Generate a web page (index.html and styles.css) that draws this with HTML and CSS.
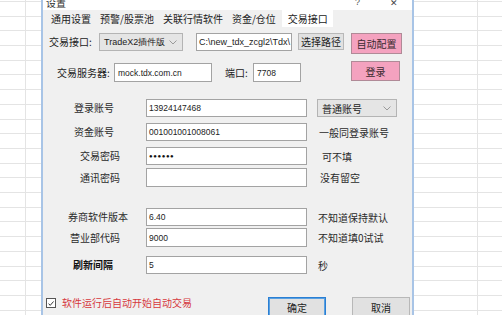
FILE: index.html
```html
<!DOCTYPE html>
<html lang="zh">
<head>
<meta charset="utf-8">
<title>设置</title>
<link rel="stylesheet" href="styles.css">
</head>
<body>
<div class="desk">
  <div class="dialog">
    <div class="titlebar">
      <span class="title">设置</span>
      <span class="tb-help">?</span>
      <span class="tb-close">✕</span>
    </div>
    <div class="tabs">
      <span class="tab">通用设置</span>
      <span class="tab">预警/股票池</span>
      <span class="tab">关联行情软件</span>
      <span class="tab">资金/仓位</span>
      <span class="tab tab-active">交易接口</span>
    </div>

    <div class="row row1">
      <span class="lbl lbl-if">交易接口:</span>
      <div class="combo combo-if"><span class="val">TradeX2插件版</span><svg class="chev" width="8" height="5" viewBox="0 0 8 5"><polyline points="0.5,0.5 4,4 7.5,0.5" fill="none" stroke="#9a9a9a" stroke-width="1"/></svg></div>
      <div class="input input-path"><span class="val">C:\new_tdx_zcgl2\Tdx\</span></div>
      <div class="btn btn-path">选择路径</div>
      <div class="btn-pink btn-auto">自动配置</div>
    </div>

    <div class="row row2">
      <span class="lbl lbl-srv">交易服务器:</span>
      <div class="input input-srv"><span class="val">mock.tdx.com.cn</span></div>
      <span class="lbl lbl-port">端口:</span>
      <div class="input input-port"><span class="val">7708</span></div>
      <div class="btn-pink btn-login">登录</div>
    </div>

    <div class="acct">
      <div class="frow r-login">
        <span class="flbl p74">登录账号</span>
        <div class="input"><span class="val">13924147468</span></div>
        <div class="combo combo-acct"><span class="val cjk">普通账号</span><svg class="chev" width="8" height="5" viewBox="0 0 8 5"><polyline points="0.5,0.5 4,4 7.5,0.5" fill="none" stroke="#9a9a9a" stroke-width="1"/></svg></div>
      </div>
      <div class="frow r-fund">
        <span class="flbl p74">资金账号</span>
        <div class="input"><span class="val">001001001008061</span></div>
        <span class="hint h319">一般同登录账号</span>
      </div>
      <div class="frow r-pwd">
        <span class="flbl p80">交易密码</span>
        <div class="input"><span class="val dots">●●●●●●</span></div>
        <span class="hint h322">可不填</span>
      </div>
      <div class="frow r-comm">
        <span class="flbl p80">通讯密码</span>
        <div class="input"></div>
        <span class="hint h320">没有留空</span>
      </div>
    </div>

    <div class="broker">
      <div class="frow r-ver">
        <span class="flbl p68">券商软件版本</span>
        <div class="input"><span class="val">6.40</span></div>
        <span class="hint h318">不知道保持默认</span>
      </div>
      <div class="frow r-dept">
        <span class="flbl p70">营业部代码</span>
        <div class="input"><span class="val">9000</span></div>
        <span class="hint h318">不知道填0试试</span>
      </div>
      <div class="frow r-refresh">
        <span class="flbl p73 bold">刷新间隔</span>
        <div class="input"><span class="val">5</span></div>
        <span class="hint h318">秒</span>
      </div>
    </div>

    <div class="footer">
      <span class="check"><svg width="9" height="9" viewBox="0 0 9 9"><polyline points="1.8,4.6 3.6,6.6 7.4,2.2" fill="none" stroke="#333" stroke-width="1.1"/></svg></span>
      <span class="auto-text">软件运行后自动开始自动交易</span>
      <div class="btn btn-ok">确定</div>
      <div class="btn btn-cancel">取消</div>
    </div>
  </div>
</div>
</body>
</html>
```

FILE: styles.css
```css
html, body {
  margin: 0;
  padding: 0;
}
body {
  width: 502px;
  height: 315px;
  overflow: hidden;
  background-color: #ffffff;
  background-image:
    repeating-linear-gradient(to bottom, #e4e4e4 0, #e4e4e4 1px, transparent 1px, transparent 14.7px),
    linear-gradient(to right, transparent 25px, #e4e4e4 25px, #e4e4e4 26px, transparent 26px, transparent 477px, #e4e4e4 477px, #e4e4e4 478px, transparent 478px);
  background-position: 0 1px, 0 0;
  font-family: "Noto Sans CJK SC", "Microsoft YaHei", sans-serif;
  color: #222;
}
.desk {
  display: flex;
  padding-left: 41px;
}
.dialog {
  width: 369px;
  height: 330px;
  margin-top: -10px;
  background: #f0f0f0;
  border-left: 2px solid #a8c4e6;
  border-right: 2px solid #a8c4e6;
  display: flex;
  flex-direction: column;
}
.titlebar {
  height: 20px;
  background: #ffffff;
  display: flex;
  align-items: center;
  font-size: 10px;
  line-height: 12px;
}
.title {
  margin-left: 3px;
  margin-top: 5px;
  color: #333;
}
.tb-help {
  margin-left: 289px;
  margin-top: 4px;
  font-family: "Liberation Sans", sans-serif;
  font-size: 9px;
  color: #555;
}
.tb-close {
  margin-left: 30px;
  margin-top: 5px;
  font-family: "DejaVu Sans", sans-serif;
  font-size: 9px;
  color: #444;
}

/* tabs */
.tabs {
  height: 17px;
  display: flex;
  align-items: stretch;
  padding-left: 4px;
  gap: 1px;
  font-size: 10px;
}
.tab {
  padding: 0 4px;
  line-height: 17px;
  color: #222;
}
.tab-active {
  background: #ffffff;
  margin-left: 1px;
  padding: 0 5px 0 6px;
}

.val {
  font-family: "Liberation Sans", sans-serif;
  font-size: 8.5px;
  color: #222;
  white-space: nowrap;
}
.cjk {
  font-family: "Noto Sans CJK SC", sans-serif;
  font-size: 10px;
}

/* generic widgets */
.input {
  box-sizing: border-box;
  background: #ffffff;
  border: 1px solid #a3a3a3;
  display: flex;
  align-items: center;
  padding-left: 2px;
  overflow: hidden;
}
.combo {
  box-sizing: border-box;
  background: #e5e5e5;
  border: 1px solid #b4b4b4;
  display: flex;
  align-items: center;
  justify-content: space-between;
  padding: 0 5px 0 4px;
}
.combo-if .val {
  font-size: 9px;
}
.chev {
  display: block;
}
.btn {
  box-sizing: border-box;
  background: #e1e1e1;
  border: 1px solid #b8b8b8;
  display: flex;
  align-items: center;
  justify-content: center;
  font-size: 10px;
  color: #222;
}
.btn-pink {
  box-sizing: border-box;
  background: #f4a2bf;
  border: 1px solid #b08a97;
  display: flex;
  align-items: center;
  justify-content: center;
  font-size: 10px;
  color: #3a2a30;
}
.lbl {
  font-size: 10px;
  white-space: nowrap;
}

/* row 1 */
.row {
  display: flex;
  align-items: flex-start;
}
.row1 {
  margin-top: 6px;
  height: 21px;
}
.lbl-if {
  width: 50px;
  margin-left: 6px;
  line-height: 18px;
}
.combo-if {
  width: 84px;
  height: 18px;
}
.input-path {
  width: 96px;
  height: 18px;
  margin-left: 13px;
}
.input-path .val {
  font-size: 9px;
}
.btn-path {
  width: 46px;
  height: 17px;
  margin-left: 6px;
}
.btn-auto {
  width: 51px;
  height: 21px;
  margin-left: 7px;
}

/* row 2 */
.row2 {
  margin-top: 7px;
  height: 21px;
}
.lbl-srv {
  width: 57px;
  margin-left: 14px;
  margin-top: 2px;
  line-height: 19px;
}
.input-srv {
  width: 98px;
  height: 19px;
  margin-top: 2px;
  padding-left: 3px;
}
.lbl-port {
  width: 28px;
  margin-left: 13px;
  margin-top: 2px;
  line-height: 19px;
}
.input-port {
  width: 48px;
  height: 19px;
  margin-top: 2px;
  padding-left: 3px;
}
.btn-login {
  width: 49px;
  height: 20px;
  margin-left: 50px;
}

/* field grids */
.acct {
  margin-top: 17px;
  display: flex;
  flex-direction: column;
}
.frow {
  display: grid;
  grid-template-columns: 103px 161px auto;
  align-items: center;
  height: 18px;
}
.frow .input {
  height: 18px;
}
.r-fund { margin-top: 6px; }
.r-pwd { margin-top: 6px; }
.r-comm { margin-top: 3px; height: 19px; }
.r-comm .input { height: 19px; }

.flbl {
  font-size: 10px;
  line-height: 18px;
  white-space: nowrap;
  color: #2a2a2a;
}
.bold { font-weight: bold; color: #111; }
.p68 { padding-left: 25px; }
.p70 { padding-left: 27px; }
.p73 { padding-left: 30px; }
.p74 { padding-left: 31px; }
.p80 { padding-left: 37px; }

.hint {
  font-size: 10px;
  white-space: nowrap;
  color: #2a2a2a;
}
.h318 { padding-left: 11px; }
.h319 { padding-left: 12px; }
.h320 { padding-left: 13px; }
.h322 { padding-left: 15px; }

.combo-acct {
  width: 80px;
  height: 18px;
  margin-left: 10px;
}
.dots {
  font-size: 6px;
  letter-spacing: 0.6px;
  color: #111;
}

.broker {
  margin-top: 21px;
  display: flex;
  flex-direction: column;
}
.r-dept { margin-top: 2px; height: 19px; }
.r-dept .input { height: 19px; }
.r-refresh { margin-top: 9px; }

/* footer */
.footer {
  margin-top: 22px;
  display: flex;
  align-items: flex-start;
  height: 21px;
}
.check {
  box-sizing: border-box;
  width: 10px;
  height: 10px;
  margin-left: 3px;
  margin-top: 2px;
  background: #ffffff;
  border: 1px solid #555;
  display: flex;
  align-items: center;
  justify-content: center;
}
.check svg { display: block; }
.auto-text {
  margin-left: 6px;
  font-size: 10px;
  line-height: 12px;
  margin-top: 1px;
  color: #d6383e;
  white-space: nowrap;
}
.btn-ok {
  width: 58px;
  height: 20px;
  margin-left: 76px;
  margin-top: 1px;
  border: 1px solid #2a7fd4;
  box-shadow: inset 0 0 0 1px #5aa0e0;
}
.btn-cancel {
  width: 58px;
  height: 20px;
  margin-left: 26px;
  margin-top: 1px;
}
```
